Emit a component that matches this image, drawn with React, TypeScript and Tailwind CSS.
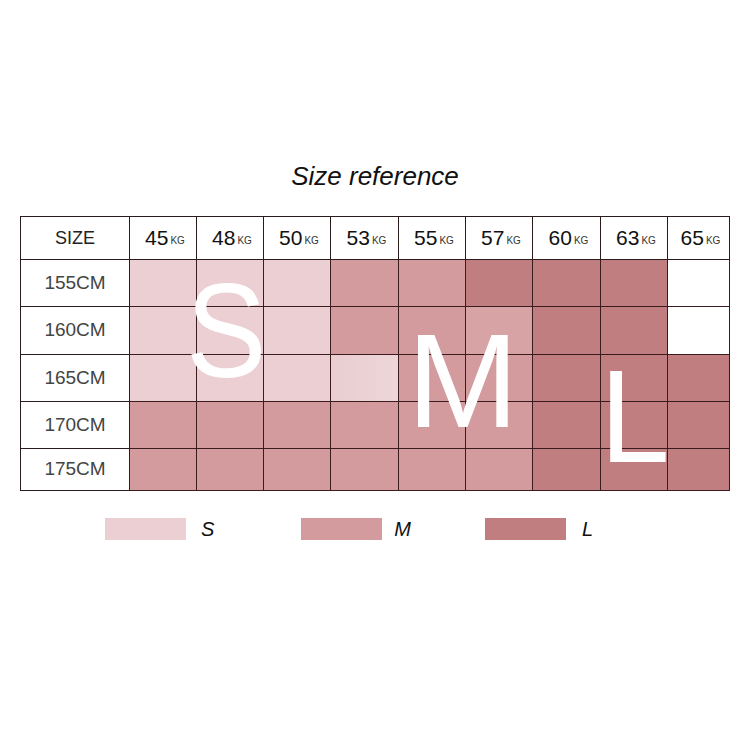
import React from "react";

const S = "bg-[#ebcfd3]";
const M = "bg-[#d39b9e]";
const L = "bg-[#c17e80]";
const W = "bg-white";
const M2 = "bg-[#d7a3a5]";
const S2 = "bg-gradient-to-r from-[#e9cdd0] to-[#eed6d8]";

const weights = ["45", "48", "50", "53", "55", "57", "60", "63", "65"];
const rows: { h: string; cells: string[]; height: string }[] = [
  { h: "155CM", cells: [S, S, S, M, M, L, L, L, W], height: "h-[47px]" },
  { h: "160CM", cells: [S, S, S, M, M, M2, L, L, W], height: "h-[48px]" },
  { h: "165CM", cells: [S, S, S, S2, M, M, L, L, L], height: "h-[47px]" },
  { h: "170CM", cells: [M, M, M, M, M, M, L, L, L], height: "h-[47px]" },
  { h: "175CM", cells: [M, M, M, M, M, M, L, L, L], height: "h-[42px]" },
];

const font = { fontFamily: '"Liberation Sans", Arial, sans-serif' };

export default function App() {
  return (
    <div className="w-[750px] h-[750px] bg-white relative" style={font}>
      <div className="pt-[160px] flex flex-col items-center">
        <div className="text-[26px] italic text-[#111] leading-[32px]">Size reference</div>
      </div>
      <div className="mt-[24px] ml-[20px] relative w-[710px]">
        <div className="grid grid-cols-[109px_67px_67px_67px_68px_67px_67px_68px_67px_62px] border-l border-t border-[#2a1c1d]">
          <div className="h-[43px] border-r border-b border-[#2a1c1d] flex items-center justify-center text-[18px] text-[#222]">
            SIZE
          </div>
          {weights.map((w) => (
            <div
              key={w}
              className="h-[43px] border-r border-b border-[#2a1c1d] flex items-center justify-center pl-[4px] text-[#111]"
            >
              <span className="text-[21px]">{w}</span>
              <span className="text-[10px] ml-[2px] mt-[5px] text-[#333]">KG</span>
            </div>
          ))}
          {rows.map((r) => (
            <React.Fragment key={r.h}>
              <div
                className={`${r.height} border-r border-b border-[#2a1c1d] flex items-center justify-center text-[19px] text-[#444] bg-white`}
              >
                {r.h}
              </div>
              {r.cells.map((c, i) => (
                <div key={i} className={`${r.height} border-r border-b border-[#3a1c1e] ${c}`} />
              ))}
            </React.Fragment>
          ))}
        </div>
        <div className="absolute left-[166px] top-[67px] h-[96px] text-[134px] leading-[96px] text-white origin-left scale-x-[0.9] pointer-events-none">
          S
        </div>
        <div className="absolute left-[387px] top-[117px] h-[96px] text-[134px] leading-[96px] text-white pointer-events-none">
          M
        </div>
        <div className="absolute left-[580px] top-[153px] h-[96px] text-[132px] leading-[96px] text-white origin-left scale-x-[0.95] pointer-events-none">
          L
        </div>
      </div>
      <div className="mt-[23px] flex items-center">
        <div className="ml-[105px] w-[81px] h-[22px] bg-[#ebcfd3]" />
        <span className="ml-[15px] text-[20px] italic text-[#111]">S</span>
        <div className="ml-[87px] w-[81px] h-[22px] bg-[#d39b9e]" />
        <span className="ml-[12px] text-[20px] italic text-[#111]">M</span>
        <div className="ml-[74px] w-[81px] h-[22px] bg-[#c17e80]" />
        <span className="ml-[16px] text-[20px] italic text-[#111]">L</span>
      </div>
    </div>
  );
}
